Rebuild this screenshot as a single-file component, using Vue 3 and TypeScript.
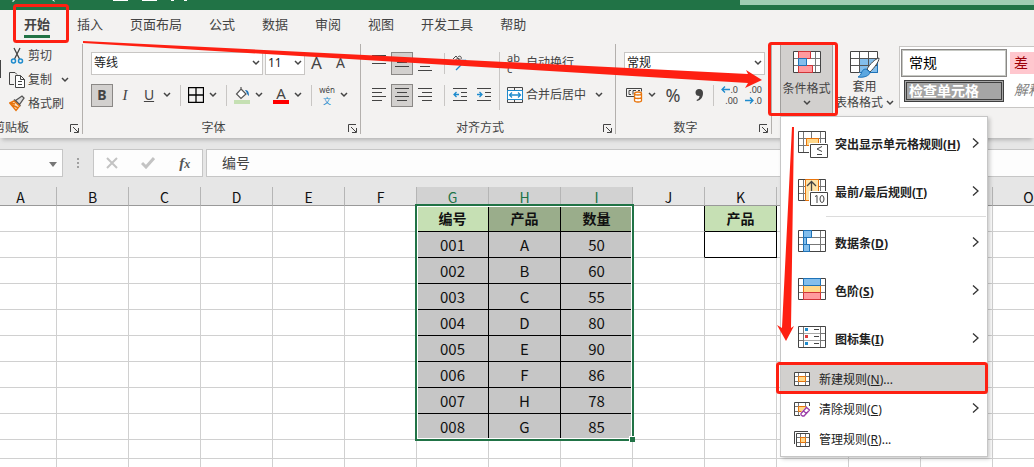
<script setup lang="ts">
import { ref } from 'vue'

const tabs = ['开始', '插入', '页面布局', '公式', '数据', '审阅', '视图', '开发工具', '帮助']
const activeTab = ref('开始')
const columns = ['A', 'B', 'C', 'D', 'E', 'F', 'G', 'H', 'I', 'J', 'K', 'L', 'M', 'N', 'O']
const records = [
  ['编号', '产品', '数量'],
  ['001', 'A', '50'],
  ['002', 'B', '60'],
  ['003', 'C', '55'],
  ['004', 'D', '80'],
  ['005', 'E', '90'],
  ['006', 'F', '86'],
  ['007', 'H', '78'],
  ['008', 'G', '85'],
]
const rows = [...records, [], []]

const formula = ref('编号')

interface MenuEntry {
  label: string
  key: string
  icon: string
}
const ruleGroups: MenuEntry[][] = [
  [
    { label: '突出显示单元格规则', key: 'H', icon: 'highlight' },
    { label: '最前/最后规则', key: 'T', icon: 'top' },
  ],
  [
    { label: '数据条', key: 'D', icon: 'bars' },
    { label: '色阶', key: 'S', icon: 'scale' },
    { label: '图标集', key: 'I', icon: 'icons' },
  ],
]

function cellText(r: number, c: number): string {
  if (c >= 6 && c <= 8) return rows[r][c - 6] ?? ''
  return r === 0 && c === 10 ? '产品' : ''
}

function cellClass(r: number, c: number) {
  const inData = c >= 6 && c <= 8 && r < records.length
  return {
    data: inData,
    head: r === 0 && (inData || c === 10),
    picked: r === 0 && (c === 7 || c === 8),
    key: c === 10 && r < 2,
    beforeKey: c === 9 && r < 2,
  }
}
</script>

<template>
  <main class="app">
    <header class="titlebar">
      <svg class="quick" width="200" height="3" viewBox="0 0 200 3" fill="#fff" aria-hidden="true">
        <path d="M12 1l2-1h1l-2 2zM52 0h2l1 2zM113 0h15v1h-15zM142 0h15v1h-15zM171 0h3v1h-3zM184 0h3v1h-3z" />
      </svg>
      <div class="search"></div>
    </header>

    <nav class="tabs" aria-label="功能区">
      <button v-for="t in tabs" :key="t" :class="{ active: t === activeTab }" @click="activeTab = t">{{ t }}</button>
    </nav>

    <section class="ribbon">
      <div class="group clipboard">
        <div class="body clip">
          <span class="paste"></span>
          <button class="tool">
            <svg width="16" height="18" viewBox="0 0 16 18" fill="none"><path d="M5 1l5.500 11M11 1L5.500 12" stroke="#444" stroke-width="1.300" /><circle cx="4.500" cy="14" r="2" stroke="#1e8bcd" stroke-width="1.500" /><circle cx="11.500" cy="14" r="2" stroke="#1e8bcd" stroke-width="1.500" /></svg>
            剪切
          </button>
          <button class="tool">
            <svg width="16" height="18" viewBox="0 0 16 18" fill="none" stroke="#444"><path d="M5 13.500H.5V1.500H6l2 2" /><path d="M6.500 4.500h5l4 4v8h-9zM11.500 4.500v4h4M9 10.500h4M9 13.500h4" fill="#fff" /></svg>
            复制
            <svg class="chev" viewBox="0 0 8 6"><path d="M1 1l3 3 3-3" /></svg>
          </button>
          <button class="tool">
            <svg width="16" height="18" viewBox="0 0 16 18" fill="none"><path d="M6.500 5.500L13 1l2 2-4.500 6.500zM5 4.500l6.500 6.500" stroke="#555" stroke-width="1.300" fill="#ddd" /><path d="M5 6L.8 8 7 15.500l3.500-4.500zM3 10l5.500 2.500M1 8l5 1" stroke="#e8740c" stroke-width="1.400" fill="#fbe3c4" /></svg>
            格式刷
          </button>
        </div>
        <div class="foot"><span>剪贴板</span><svg class="launch" viewBox="0 0 9 9"><path d="M8 .5H.5V8M3 3l5 5M8.500 4v4.500H4" /></svg></div>
      </div>

      <div class="group font">
        <div class="body">
          <div class="line">
            <div class="combo family">
              <select aria-label="字体"><option>等线</option></select>
              <svg class="chev" viewBox="0 0 8 6"><path d="M1 1l3 3 3-3" /></svg>
            </div>
            <div class="combo size">
              <select aria-label="字号"><option>11</option></select>
              <svg class="chev" viewBox="0 0 8 6"><path d="M1 1l3 3 3-3" /></svg>
            </div>
            <button class="letter grow" aria-label="增大字号">A<svg width="5" height="4" viewBox="0 0 5 4"><path d="M.5 3.500l2-2 2 2" fill="none" stroke="#1e8bcd" /></svg></button>
            <button class="letter shrink" aria-label="减小字号">A</button>
          </div>
          <div class="line">
            <button class="sq on"><b>B</b></button>
            <button class="sq w24"><i>I</i></button>
            <button class="sq w24"><u>U</u></button>
            <svg class="chev pad" viewBox="0 0 8 6"><path d="M1 1l3 3 3-3" /></svg>
            <span class="sep"></span>
            <button class="sq w16" aria-label="边框"><svg width="16" height="16" viewBox="0 0 16 16" fill="none" stroke="#000"><path d="M.5.5h15v15H.5zM8 1v14M1 8h14" stroke-width="1.300" /></svg></button>
            <svg class="chev wide" viewBox="0 0 8 6"><path d="M1 1l3 3 3-3" /></svg>
            <span class="sep"></span>
            <button class="sq w16" aria-label="填充颜色"><svg width="16" height="18" viewBox="0 0 16 18"><path d="M7 3l5 5-5 4.500L2.500 8zM7 3V1" fill="#fff" stroke="#555" stroke-width="1.200" /><path d="M11 4c3 0 4 2 4 6-2-1-2-4-4-6z" fill="#1e73b8" /><path d="M0 14h16v4H0z" fill="#c5e0b3" /></svg></button>
            <svg class="chev wide" viewBox="0 0 8 6"><path d="M1 1l3 3 3-3" /></svg>
            <button class="sq color">A</button>
            <svg class="chev wide" viewBox="0 0 8 6"><path d="M1 1l3 3 3-3" /></svg>
            <span class="sep"></span>
            <button class="sq w16 pinyin"><span>wén</span><span class="blue">文</span></button>
            <svg class="chev wide" viewBox="0 0 8 6"><path d="M1 1l3 3 3-3" /></svg>
          </div>
        </div>
        <div class="foot"><span>字体</span><svg class="launch" viewBox="0 0 9 9"><path d="M8 .5H.5V8M3 3l5 5M8.500 4v4.500H4" /></svg></div>
      </div>

      <div class="group align">
        <div class="body split">
          <div class="stack">
            <div class="line">
              <button class="sq w24" aria-label="顶端对齐"><svg class="ln" width="14" height="16" viewBox="0 0 14 16"><path d="M0 .5h14M2 4.500h10M0 8.500h14" /></svg></button>
              <button class="sq on" aria-label="垂直居中"><svg class="ln" width="14" height="16" viewBox="0 0 14 16"><path d="M0 3.500h14M2 7.500h10M0 11.500h14" /></svg></button>
              <button class="sq w24" aria-label="底端对齐"><svg class="ln" width="14" height="16" viewBox="0 0 14 16"><path d="M0 7.500h14M2 11.500h10M0 15.500h14" /></svg></button>
              <span class="sep"></span>
              <button class="sq w16" aria-label="方向"><svg class="ln" width="16" height="16" viewBox="0 0 16 16"><path d="M1 4l3-3 4 5M2 8c0-4 6-6 6-3s-4 4-5 2M6 2c2-2 4 0 3 2" /><path d="M4 15L14 5M9 5.500h4.500V10" class="bl" /></svg></button>
            </div>
            <div class="line">
              <button class="sq w24" aria-label="左对齐"><svg class="ln" width="14" height="14" viewBox="0 0 14 14"><path d="M0 .5h14M0 4.500h10M0 8.500h14M0 12.500h10" /></svg></button>
              <button class="sq on" aria-label="居中"><svg class="ln" width="14" height="14" viewBox="0 0 14 14"><path d="M0 .5h14M2 4.500h10M0 8.500h14M2 12.500h10" /></svg></button>
              <button class="sq w24" aria-label="右对齐"><svg class="ln" width="14" height="14" viewBox="0 0 14 14"><path d="M0 .5h14M4 4.500h10M0 8.500h14M4 12.500h10" /></svg></button>
              <span class="sep"></span>
              <button class="sq w16" aria-label="减少缩进"><svg class="ln" width="14" height="14" viewBox="0 0 14 14"><path d="M0 .5h14M8 4.500h6M8 8.500h6M0 12.500h14" /><path class="bl" d="M6 6.500H1M3.500 4L1 6.500 3.500 9" /></svg></button>
              <button class="sq indent" aria-label="增加缩进"><svg class="ln" width="14" height="14" viewBox="0 0 14 14"><path d="M0 .5h14M8 4.500h6M8 8.500h6M0 12.500h14" /><path class="bl" d="M0 6.500h5M2.500 4L5 6.500 2.500 9" /></svg></button>
            </div>
          </div>
          <span class="tall"></span>
          <div class="stack texts">
            <button class="tool"><span class="ab"><span>ab</span><span>c</span></span>自动换行</button>
            <button class="tool">
              <svg width="16" height="16" viewBox="0 0 16 16" fill="none"><path d="M.5.500h15v15H.5zM7.500.500v3M7.500 12.500v3" stroke="#444" /><path d="M.5 3.500h15v9H.5z" fill="#fff" stroke="#1e8bcd" /><path d="M2.500 8h11M5 5.500L2.500 8 5 10.500M11 5.500L13.500 8 11 10.500" stroke="#1e8bcd" stroke-width="1.300" /></svg>
              合并后居中
              <svg class="chev" viewBox="0 0 8 6"><path d="M1 1l3 3 3-3" /></svg>
            </button>
          </div>
        </div>
        <div class="foot"><span>对齐方式</span><svg class="launch" viewBox="0 0 9 9"><path d="M8 .5H.5V8M3 3l5 5M8.500 4v4.500H4" /></svg></div>
      </div>

      <div class="group number">
        <div class="body">
          <div class="line">
            <div class="combo format">
              <select aria-label="数字格式"><option>常规</option></select>
              <svg class="chev" viewBox="0 0 8 6"><path d="M1 1l3 3 3-3" /></svg>
            </div>
          </div>
          <div class="line">
            <button class="sq money" aria-label="会计数字格式"><svg width="17" height="16" viewBox="0 0 17 16" fill="none"><path d="M8 9.500H.5v-8h15v3M5 3.500H3v4h2M7 7.500v-4h3M12 3.500h2" stroke="#444" /><path d="M8.500 6.500c0-2 7-2 7 0v7c0 2-7 2-7 0zM8.500 6.500c0 2 7 2 7 0M8.500 10c0 2 7 2 7 0" fill="#fff" stroke="#e8740c" stroke-width="1.300" /></svg></button>
            <svg class="chev wide" viewBox="0 0 8 6"><path d="M1 1l3 3 3-3" /></svg>
            <button class="sq percent">%</button>
            <button class="sq comma" aria-label="千位分隔样式"><svg width="10" height="14" viewBox="0 0 10 14"><path d="M5 1c3 0 4 2 4 4 0 4-2 7-6 8l-.5-1c2-1 3-2 3-4C3 8 1.500 7 1.500 4.500 1.500 2.500 3 1 5 1z" fill="#444" /></svg></button>
            <span class="sep"></span>
            <button class="sq digits"><span><svg width="9" height="7" viewBox="0 0 9 7"><path d="M9 3.500H1M4 .5l-3 3 3 3" /></svg>.0</span><span>.00</span></button>
            <button class="sq digits"><span>.00</span><span><svg width="9" height="7" viewBox="0 0 9 7"><path d="M0 3.500h8M5 .5l3 3-3 3" /></svg>.0</span></button>
          </div>
        </div>
        <div class="foot"><span>数字</span><svg class="launch" viewBox="0 0 9 9"><path d="M8 .5H.5V8M3 3l5 5M8.500 4v4.500H4" /></svg></div>
      </div>

      <div class="styles">
        <button class="big pressed">
          <svg width="28" height="22" viewBox="0 0 28 22" fill="none"><path d="M.5.5h27v21H.5z" fill="#fff" stroke="#444" /><path d="M5.500 1v20M22.500 1v20M1 7.500h26M1 14.500h26" stroke="#777" /><path d="M5.500.5h12v7h-12zM5.500 14.500h14v7h-14z" fill="#ff9a9e" stroke="#d13438" /><path d="M14 8h8v6h-8z" fill="#fff" /><path d="M5.500 7.500h8v7h-8z" fill="#83beec" stroke="#1e73b8" /></svg>
          <span class="first">条件格式</span>
          <svg class="chev" viewBox="0 0 8 6"><path d="M1 1l3 3 3-3" /></svg>
        </button>
        <button class="big table-style">
          <svg width="30" height="27" viewBox="0 0 30 27" fill="none"><path d="M.5.5h27v21H.5z" fill="#fff" stroke="#444" /><path d="M9.500 7.500h18v14h-18z" fill="#83beec" stroke="#1e73b8" /><path d="M9.500 1v20M18.500 1v20M1 7.500h26M1 14.500h26" stroke="#555" /><path d="M29 7c-4 1-9 6-12 11l3 3c4-4 9-10 9-14z" fill="#fff" stroke="#444" /><path d="M16 18c-3 0-4 2-5 5-1 2-2 2-3 3 5 1 12-1 12-5z" fill="#5ba7e0" stroke="#1e73b8" /></svg>
          <span>套用</span>
          <span class="two">表格格式<svg class="chev" viewBox="0 0 8 6"><path d="M1 1l3 3 3-3" /></svg></span>
        </button>
        <div class="gallery">
          <button class="style normal">常规</button>
          <button class="style bad">差</button>
          <button class="style check">检查单元格</button>
          <button class="style note">解释性文本</button>
        </div>
      </div>
    </section>

    <section class="formula">
      <button class="namebox" aria-label="名称框"><svg width="8" height="5" viewBox="0 0 8 5"><path d="M0 0h8L4 5z" fill="#777" /></svg></button>
      <svg class="dots" width="2" height="11" viewBox="0 0 2 11" fill="#a0a0a0"><path d="M0 0h2v2H0zM0 4h2v2H0zM0 8h2v2H0z" /></svg>
      <div class="actions">
        <button aria-label="取消"><svg width="12" height="12" viewBox="0 0 12 12" fill="none" stroke="#c3c3c3" stroke-width="2"><path d="M1 1l10 10M11 1L1 11" /></svg></button>
        <button aria-label="输入"><svg width="14" height="12" viewBox="0 0 14 12" fill="none" stroke="#c3c3c3" stroke-width="3"><path d="M1 6l4 4 8-9" /></svg></button>
        <button class="fx">f<small>x</small></button>
      </div>
      <input v-model="formula" aria-label="编辑栏" />
    </section>

    <section class="sheet">
      <div class="canvas">
        <table>
          <thead>
            <tr>
              <th v-for="(c, i) in columns" :key="c" :class="{ sel: i >= 6 && i <= 8 }">{{ c }}</th>
            </tr>
          </thead>
          <tbody>
            <tr v-for="(row, r) in rows" :key="r" :class="{ short: r >= records.length }">
              <td v-for="(c, i) in columns" :key="c" :class="cellClass(r, i)">{{ cellText(r, i) }}</td>
            </tr>
          </tbody>
        </table>
        <div class="selection"><span class="handle"></span></div>
      </div>
    </section>

    <div class="menu" role="menu">
      <template v-for="(group, g) in ruleGroups" :key="g">
        <hr v-if="g > 0" />
        <button v-for="m in group" :key="m.key" class="item large" role="menuitem">
          <svg width="31" height="28" viewBox="0 0 31 28" fill="none">
            <path d="M.5 1.500h27v21H.5z" fill="#fff" stroke="#444" />
            <path d="M5.500 2v20M22.500 2v20M1 8.500h26M1 15.500h26" stroke="#777" />
            <template v-if="m.icon === 'highlight'">
              <path d="M13.500 2v20" stroke="#777" />
              <path d="M8.500 8.500h12v7h-12z" fill="#ffd88a" stroke="#e8740c" />
              <path d="M11 13h19v15H11z" fill="#fff" />
              <path d="M12.500 14.500h17v13h-17z" fill="#fff" stroke="#444" />
              <path d="M24 16.500l-5 2.500 5 2.500M19 24.500h5" stroke="#444" />
            </template>
            <template v-else-if="m.icon === 'top'">
              <path d="M7.500 1.500h13v21h-13z" fill="#ffe3a8" stroke="#e8740c" />
              <path d="M13.500 14V3.500M9 8l4.500-4.500L18 8" stroke="#444" stroke-width="1.300" />
              <path d="M11 13h19v15H11z" fill="#fff" />
              <path d="M12.500 14.500h17v13h-17z" fill="#fff" stroke="#444" />
              <path d="M17 18.500l2-1v7.500" stroke="#444" />
              <ellipse cx="24" cy="21" rx="2" ry="3.500" stroke="#444" />
            </template>
            <template v-else-if="m.icon === 'bars'">
              <path d="M5.500 1.500h8v7h-8zM5.500 8.500h3v7h-3zM5.500 15.500h6v7h-6z" fill="#83beec" stroke="#1e73b8" />
            </template>
            <template v-else-if="m.icon === 'scale'">
              <path d="M5.500 8.500h17v7h-17z" fill="#ffd88a" stroke="#e8740c" />
              <path d="M5.500 1.500h17v7h-17z" fill="#83beec" stroke="#1e73b8" />
              <path d="M5.500 15.500h17v7h-17z" fill="#ff9a9e" stroke="#d13438" />
            </template>
            <template v-else>
              <path d="M6 2h16v20H6z" fill="#fff" />
              <path d="M6 8.500h16M6 15.500h16" stroke="#aaa" />
              <path d="M16 4.500h5M16 11.500h5M16 18.500h5" stroke="#444" />
              <path d="M7 3h3v3H7zM7 17h3v3H7z" fill="#1e8bcd" />
              <path d="M7 10h3v3H7z" fill="#e03c3c" />
            </template>
          </svg>
          <span>{{ m.label }}(<u>{{ m.key }}</u>)</span>
          <svg class="more" width="7" height="10" viewBox="0 0 7 10"><path d="M1 .5L6 5 1 9.500" /></svg>
        </button>
      </template>
      <div class="commands">
        <button class="item hover" role="menuitem">
          <svg width="16" height="16" viewBox="0 0 16 16" fill="none"><path d="M.5 1.500h15v13H.5z" fill="#fff" stroke="#444" /><path d="M4.500 2v12M11.500 2v12M1 5.500h14M1 10.500h14" stroke="#777" /><path d="M4.500 5.500h7v5h-7z" fill="#ffd88a" stroke="#e8740c" /></svg>
          <span>新建规则(<u>N</u>)...</span>
        </button>
        <button class="item" role="menuitem">
          <svg width="16" height="16" viewBox="0 0 16 16" fill="none"><path d="M.5 1.500h15v13H.5z" fill="#fff" stroke="#444" /><path d="M4.500 2v12M11.500 2v12M1 5.500h14M1 10.500h14" stroke="#777" /><path d="M4.500 5.500h7v5h-7z" fill="#ffd88a" stroke="#e8740c" /><path d="M6 12l7-7h3v11H6z" fill="#fff" /><path d="M7 12.500l5.500-6 3 2.500-5.500 6H8.500L7 14zM9.500 10l3 2.500" stroke="#9b3fa8" stroke-width="1.300" /></svg>
          <span>清除规则(<u>C</u>)</span>
          <svg class="more" width="7" height="10" viewBox="0 0 7 10"><path d="M1 .5L6 5 1 9.500" /></svg>
        </button>
        <button class="item" role="menuitem">
          <svg width="16" height="16" viewBox="0 0 16 16" fill="none"><path d="M.5 13V.5H14" stroke="#444" /><path d="M2.500 2.500h13v13h-13z" fill="#fff" stroke="#444" /><path d="M6.500 3v12M11.500 3v12M3 6.500h12M3 11.500h12" stroke="#777" /><path d="M6.500 6.500h5v5h-5z" fill="#ffd88a" stroke="#e8740c" /></svg>
          <span>管理规则(<u>R</u>)...</span>
        </button>
      </div>
    </div>

    <svg class="marks" width="1034" height="467" viewBox="0 0 1034 467" aria-hidden="true">
      <g fill="none" stroke="#fe2012" stroke-width="3">
        <rect x="14.500" y="5.500" width="53" height="36" rx="2" />
        <rect x="769.500" y="43.500" width="67" height="71" rx="2" />
        <rect x="777.500" y="363.500" width="209" height="29" rx="2" />
      </g>
      <g fill="#fe2012">
        <path d="M83 41L748 74L746 70L762 80L745 88L748 83L83 43z" />
        <path d="M792 127h2L791 328L794 326L786 341L777 325L782 328z" />
      </g>
    </svg>
  </main>
</template>

<style>
body {
  margin: 0;
  overflow: hidden;
}
</style>

<style scoped>
.app {
  position: relative;
  height: 100vh;
  overflow: hidden;
  display: flex;
  flex-direction: column;
  background: #e6e6e6;
  color: #444;
  font: 12px/16px 'Noto Sans', 'Noto Sans CJK SC', sans-serif;
}
* {
  box-sizing: border-box;
}
button,
select,
input {
  margin: 0;
  padding: 0;
  border: 0;
  background: none;
  color: inherit;
  font: inherit;
}
button {
  white-space: nowrap;
}
svg {
  flex: none;
}
.titlebar {
  flex: none;
  display: flex;
  justify-content: space-between;
  align-items: flex-start;
  height: 10px;
  background: #217346;
}
.search {
  width: 294px;
  height: 5px;
  background: #9fcdb3;
}
.tabs {
  flex: none;
  display: flex;
  gap: 27px;
  height: 34px;
  padding: 5px 24px 0;
  background: #f3f2f1;
  font-size: 13px;
}
.tabs button {
  height: 23px;
  padding-bottom: 2px;
  border-bottom: 3px solid transparent;
  line-height: 18px;
}
.tabs .active {
  border-color: #217346;
  font-weight: 700;
}
.ribbon {
  flex: none;
  display: flex;
  height: 94px;
  padding-bottom: 4px;
  background: #f3f2f1;
  box-shadow: 0 4px 4px -2px #b4b4b4;
}
.group {
  flex: none;
  display: flex;
  flex-direction: column;
  justify-content: space-between;
  border-right: 1px solid #b3b0ad;
}
.clipboard {
  width: 83px;
}
.font {
  width: 278px;
}
.align {
  width: 255px;
}
.number {
  width: 156px;
}
.body {
  padding: 8px 0 0 8px;
}
.body,
.stack {
  display: flex;
  flex-direction: column;
  gap: 10px;
}
.line {
  display: flex;
  align-items: center;
  height: 22px;
}
.clip {
  position: relative;
  padding: 3px 0 0 9px;
  gap: 6px;
}
.paste {
  position: absolute;
  left: 0;
  top: 16px;
  width: 1px;
  height: 18px;
  background: #444;
}
.tool {
  display: flex;
  align-items: center;
  gap: 3px;
  height: 18px;
}
.chev {
  width: 8px;
  height: 6px;
  fill: none;
  stroke: #444;
  stroke-width: 1.5;
}
.tool .chev {
  margin-left: 6px;
}
.line > .pad {
  margin: 0 2px;
}
.line > .wide {
  margin: 0 5px;
}
.line > .wide + .sep {
  margin-left: 4px;
}
.foot {
  display: flex;
  align-items: center;
  height: 12px;
  padding-right: 3px;
}
.foot span {
  flex: 1;
  padding-right: 4px;
  text-align: center;
}
.clipboard .foot span {
  text-align: left;
  padding: 0;
  margin-left: -7px;
}
.launch {
  width: 9px;
  height: 9px;
  fill: none;
  stroke: #444;
}
.combo {
  display: grid;
  align-items: center;
  height: 23px;
  border: 1px solid #c8c6c4;
  background: #fff;
  color: #222;
}
.combo > * {
  grid-area: 1 / 1;
}
.combo select {
  width: 100%;
  height: 21px;
  padding-left: 2px;
  appearance: none;
}
.combo .chev {
  justify-self: end;
  margin-right: 2px;
  pointer-events: none;
}
.family {
  width: 172px;
}
.size {
  width: 40px;
  margin-left: 2px;
}
.format {
  width: 141px;
}
.letter {
  display: flex;
  align-items: flex-start;
  line-height: 20px;
}
.grow {
  margin-left: 6px;
  font-size: 17px;
}
.shrink {
  margin-left: 9px;
  font-size: 14px;
}
.sq {
  display: flex;
  align-items: center;
  justify-content: center;
  flex: none;
  width: 22px;
  height: 22px;
  font-size: 14px;
}
.on {
  height: 23px;
  border: 1px solid #8a8886;
  background: #d2d0ce;
}
.sq i {
  font-family: 'Liberation Serif', serif;
  font-size: 15px;
}
.w24 {
  width: 24px;
}
.w16 {
  width: 16px;
}
.sep {
  width: 1px;
  height: 21px;
  margin: 0 7px;
  background: #c8c6c4;
}
.color {
  width: 16px;
  height: 18px;
  margin-left: 5px;
  border-bottom: 4px solid #f00;
  font-size: 15px;
  line-height: 14px;
}
.pinyin {
  flex-direction: column;
  font-size: 8px;
  line-height: 11px;
}
.pinyin .blue {
  color: #1e8bcd;
}
.ln {
  fill: none;
  stroke: #444;
}
.ln .bl,
.digits svg {
  fill: none;
  stroke: #1e8bcd;
  stroke-width: 1.3;
}
.body.split {
  flex-direction: row;
  gap: 7px;
  padding-left: 6px;
}
.indent {
  width: 16px;
  margin-left: 8px;
}
.tall {
  width: 1px;
  height: 58px;
  background: #c8c6c4;
}
.texts .tool {
  height: 22px;
}
.ab {
  display: flex;
  flex-direction: column;
  width: 16px;
  font-size: 11px;
  line-height: 11px;
  text-align: left;
}
.money {
  width: 17px;
  margin-left: 2px;
}
.percent {
  width: 18px;
  margin-left: 3px;
  font-size: 18px;
}
.comma {
  width: 18px;
  margin: 0 5px 0 8px;
}
.number .sep {
  margin: 0 7px 0 0;
}
.digits {
  flex-direction: column;
  align-items: flex-end;
  width: 17px;
  font-size: 9px;
  line-height: 11px;
}
.digits span {
  display: flex;
  align-items: center;
}
.digits + .digits {
  margin-left: 7px;
}
.styles {
  flex: 1;
  min-width: 0;
  display: flex;
  align-items: flex-start;
  padding-left: 8px;
}
.big {
  flex: none;
  display: flex;
  flex-direction: column;
  align-items: center;
  width: 53px;
  height: 72px;
  padding-top: 7px;
}
.big span {
  line-height: 15px;
}
.big .first {
  margin: 8px 0 4px;
}
.pressed {
  border: solid #a19f9d;
  border-width: 0 1px;
  background: #d2d0ce;
}
.table-style {
  width: 63px;
  margin-right: 3px;
  gap: 1px;
}
.two {
  display: flex;
  align-items: center;
  gap: 3px;
}
.gallery {
  flex: 1;
  min-width: 0;
  display: grid;
  grid-template-columns: 106px 90px;
  grid-template-rows: 28px 28px;
  gap: 2px 3px;
  height: 62px;
  margin-top: 2px;
  padding: 2px 0 0 1px;
  border: 1px solid #c8c6c4;
  border-right: 0;
  background: #fff;
  overflow: hidden;
}
.style {
  padding-left: 4px;
  font-size: 14px;
  text-align: left;
}
.normal {
  border: 2px solid #c6c8c3;
  outline: 1px solid #8a8886;
  outline-offset: -1px;
  color: #000;
  padding-left: 6px;
}
.bad {
  height: 22px;
  align-self: center;
  background: #ffc7ce;
  color: #9c0006;
}
.check {
  height: 22px;
  margin: 1px 3px;
  padding-left: 2px;
  border: 3px double #3f3f3f;
  background: #a5a5a5;
  color: #fff;
  font-weight: 700;
  line-height: 16px;
}
.note {
  height: 22px;
  color: #7f7f7f;
  font-style: italic;
}
.formula {
  flex: none;
  display: flex;
  align-items: center;
  height: 49px;
  padding-top: 1px;
}
.namebox,
.actions,
.formula input {
  height: 28px;
  border: 1px solid #c6c6c6;
  background: #fdfdfd;
}
.namebox {
  width: 63px;
  padding-right: 5px;
  border-left: 0;
  text-align: right;
}
.dots {
  margin: 0 14px;
}
.actions {
  display: flex;
  align-items: center;
  justify-content: space-around;
  width: 110px;
  margin-right: 3px;
}
.actions button {
  display: flex;
}
.formula .fx {
  color: #555;
  display: inline;
  font: italic 700 15px/18px 'Liberation Serif', serif;
}
.fx small {
  font-size: 12px;
}
.formula input {
  flex: 1;
  min-width: 0;
  padding: 0 0 3px 15px;
  border-right: 0;
  font-size: 14px;
}
.sheet {
  flex: 1;
  min-height: 0;
  overflow: hidden;
}
/* the first column is partly scrolled out of view */
.canvas {
  position: relative;
  width: max-content;
  margin-left: -15px;
}
table {
  table-layout: fixed;
  width: 1080px;
  border-spacing: 0;
  background: #fff;
  color: #111;
  font: 15px/20px 'Noto Sans CJK SC', sans-serif;
}
th,
td {
  padding: 0;
  border: solid #d0d0d0;
  border-width: 0 1px 1px 0;
  text-align: center;
}
th {
  height: 19px;
  padding-top: 2px;
  border-right-color: #b5b5b5;
  border-bottom-color: #999;
  background: #e6e6e6;
  font-size: 14px;
  font-weight: 400;
  line-height: 16px;
}
.sel {
  background: #d2d2d2;
  color: #217346;
}
td {
  height: 26px;
  line-height: 25px;
}
.short td {
  height: 19px;
  line-height: 18px;
}
.data {
  border-color: #000;
  background: #c6c6c6;
}
.head {
  background: #c6e0b4;
  font-size: 14px;
  font-weight: 700;
}
.picked {
  background: #9aad8b;
}
.key {
  border-color: #000;
}
.beforeKey {
  border-right-color: #000;
}
.selection {
  position: absolute;
  left: 430px;
  top: 17px;
  width: 219px;
  height: 237px;
  border: 2px solid #217346;
  box-shadow: inset 0 0 0 1px #fff;
}
.handle {
  position: absolute;
  right: -3px;
  bottom: -3px;
  width: 6px;
  height: 6px;
  border: solid #fff;
  border-width: 1px 0 0 1px;
  background: #217346;
}
.menu {
  position: absolute;
  left: 780px;
  top: 116px;
  width: 208px;
  padding: 3px 0 2px;
  border: 1px solid #c6c6c6;
  background: #fff;
  box-shadow: 2px 2px 4px rgba(0, 0, 0, 0.2);
  color: #222;
}
.item {
  display: flex;
  align-items: center;
  width: 100%;
  height: 30px;
  padding: 0 8px 0 13px;
  gap: 9px;
}
.item span {
  flex: 1;
  padding-top: 2px;
  text-align: left;
}
.large {
  height: 48px;
  padding-left: 17px;
  gap: 6px;
  font-weight: 700;
}
.more {
  margin-bottom: 3px;
  fill: none;
  stroke: #333;
  stroke-width: 1.3;
}
.hover {
  background: #d2d0ce;
}
hr {
  height: 1px;
  margin: 0 1px 2px 45px;
  border: 0;
  background: #dcdcdc;
}
.commands {
  padding-top: 1px;
}
.marks {
  position: absolute;
  left: 0;
  top: 0;
  pointer-events: none;
}
</style>
